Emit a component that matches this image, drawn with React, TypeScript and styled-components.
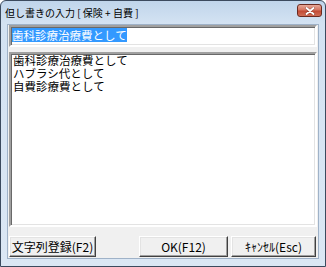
import React from 'react';
import styled, { createGlobalStyle } from 'styled-components';

const GlobalStyle = createGlobalStyle`
  html, body {
    margin: 0;
    padding: 0;
    background: #ffffff;
  }
  body {
    font-family: "Noto Sans CJK JP", "DejaVu Sans", sans-serif;
    font-size: 12px;
  }
`;

const Window = styled.div`
  width: 326px;
  height: 267px;
  box-sizing: border-box;
  border: 1px solid #3b4a5e;
  border-radius: 6px 6px 0 0;
  background: linear-gradient(180deg, #c0d5eb 0px, #d3e2f2 22px, #dbe7f4 100%);
  display: flex;
  flex-direction: column;
  overflow: hidden;
`;

const TitleBar = styled.div`
  height: 23px;
  flex: 0 0 23px;
  display: flex;
  align-items: flex-start;
  justify-content: space-between;
  padding: 0 3px 0 4px;
`;

const Title = styled.span`
  font-size: 10px;
  line-height: 12px;
  margin-top: 6px;
  color: #000;
  white-space: pre;
`;

const CloseButton = styled.div`
  width: 25px;
  height: 13px;
  margin-top: 3px;
  box-sizing: border-box;
  border: 1px solid #6b2a20;
  border-radius: 3px;
  background: linear-gradient(180deg, #e6a898 0%, #d57560 45%, #c24b35 55%, #d06e56 100%);
  display: flex;
  align-items: center;
  justify-content: center;
`;

const Client = styled.div`
  flex: 1;
  min-height: 0;
  margin: 0 6px 7px 6px;
  background: #f0f0f0;
  border: 1px solid #9fb2c8;
  display: flex;
  flex-direction: column;
  padding: 0 1px;
`;

const Sunken = styled.div`
  box-sizing: border-box;
  border-style: solid;
  border-width: 2px;
  border-color: #a0a0a0 #ffffff #ffffff #a0a0a0;
  box-shadow: inset 1px 1px 0 #696969, inset -1px -1px 0 #e3e3e3;
  background: #ffffff;
`;

const InputBox = styled(Sunken)`
  height: 22px;
  flex: 0 0 22px;
  padding: 1px 1px 0 1px;
  display: flex;
  align-items: flex-start;
`;

const Selected = styled.span`
  background: #3399ff;
  color: #ffffff;
  font-size: 11.5px;
  line-height: 14px;
  height: 14px;
  white-space: nowrap;
`;

const ListBox = styled(Sunken)`
  margin-top: 5px;
  height: 175px;
  flex: 0 0 175px;
  padding: 0 2px;
  display: flex;
  flex-direction: column;
`;

const ListItem = styled.div`
  font-size: 11.5px;
  line-height: 13px;
  height: 13px;
  color: #000;
  white-space: nowrap;
`;

const ButtonRow = styled.div`
  margin-top: 9px;
  display: flex;
  align-items: center;
`;

const Button = styled.div<{ $w: number; $gap?: number }>`
  width: ${p => p.$w}px;
  margin-left: ${p => p.$gap ?? 0}px;
  height: 21px;
  flex: 0 0 auto;
  box-sizing: border-box;
  border-style: solid;
  border-width: 1px;
  border-color: #ffffff #404040 #404040 #ffffff;
  box-shadow: inset -1px -1px 0 #a0a0a0, inset 1px 1px 0 #e3e3e3;
  background: #f0f0f0;
  font-size: 12px;
  line-height: 19px;
  text-align: center;
  color: #000;
  white-space: nowrap;
  overflow: hidden;
  font-feature-settings: "palt" 1;
`;

const CloseIcon = () => (
  <svg width="10" height="8" viewBox="0 0 10 8">
    <path d="M1.5 1 L8.5 7 M8.5 1 L1.5 7" stroke="#3d1a12" strokeWidth="3" strokeLinecap="round" opacity="0.35" />
    <path d="M1.5 1 L8.5 7 M8.5 1 L1.5 7" stroke="#ffffff" strokeWidth="1.8" strokeLinecap="round" />
  </svg>
);

const items = ['歯科診療治療費として', 'ハブラシ代として', '自費診療費として'];

const App: React.FC = () => {
  return (
    <>
      <GlobalStyle />
      <Window>
        <TitleBar>
          <Title>但し書きの入力 [ 保険 + 自費 ]</Title>
          <CloseButton>
            <CloseIcon />
          </CloseButton>
        </TitleBar>
        <Client>
          <InputBox>
            <Selected>歯科診療治療費として</Selected>
          </InputBox>
          <ListBox>
            {items.map(item => (
              <ListItem key={item}>{item}</ListItem>
            ))}
          </ListBox>
          <ButtonRow>
            <Button $w={87}>文字列登録(F2)</Button>
            <Button $w={89} $gap={43}>OK(F12)</Button>
            <Button $w={85} $gap={3}>ｷｬﾝｾﾙ(Esc)</Button>
          </ButtonRow>
        </Client>
      </Window>
    </>
  );
};

export default App;
